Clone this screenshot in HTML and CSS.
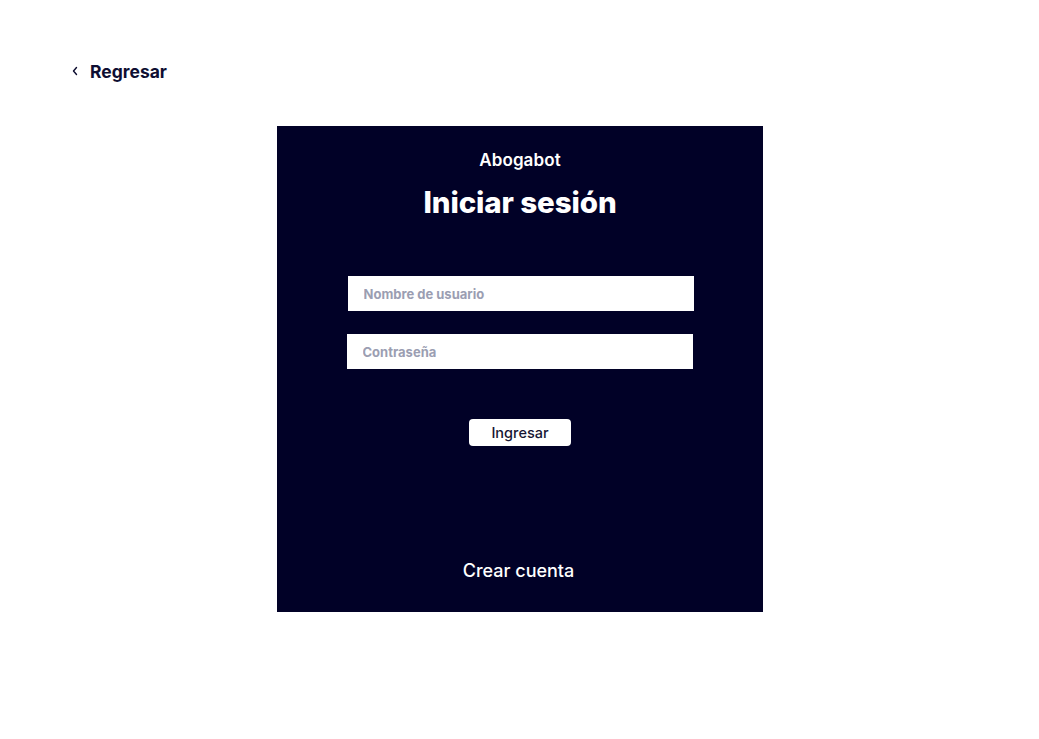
FILE: index.html
```html
<!DOCTYPE html>
<html lang="es">
<head>
<meta charset="utf-8">
<title>Abogabot - Iniciar sesión</title>
<link rel="stylesheet" href="styles.css">
</head>
<body>
<div class="page">
  <a class="back" href="#">
    <svg class="chev" width="8" height="10" viewBox="0 0 8 10"><path d="M5.5 1.5 L2.5 5 L5.5 8.5" fill="none" stroke="#0b0b2e" stroke-width="1.4" stroke-linecap="round" stroke-linejoin="round"/></svg>
    <span>Regresar</span>
  </a>
  <div class="card">
    <div class="brand">Abogabot</div>
    <h1 class="title">Iniciar sesión</h1>
    <form class="form">
      <input class="field" type="text" placeholder="Nombre de usuario">
      <input class="field field-2" type="password" placeholder="Contraseña">
      <button class="submit" type="button">Ingresar</button>
    </form>
    <a class="create" href="#">Crear cuenta</a>
  </div>
</div>
</body>
</html>
```
FILE: styles.css
```css
* { box-sizing: border-box; }
html, body { margin: 0; padding: 0; background: #ffffff; }
body { font-family: Inter, "Noto Sans", sans-serif; }
.page {
  padding: 59px 0 0 0;
  display: flex;
  flex-direction: column;
}
.back {
  display: flex;
  align-items: center;
  gap: 11px;
  margin-left: 71px;
  color: #0e0e32;
  text-decoration: none;
  font-weight: 700;
  font-size: 17.5px;
  height: 24px;
}
.chev { display: block; }
.card {
  align-self: center;
  margin-top: 43px;
  margin-left: 1px;
  width: 486px;
  height: 486px;
  background: #010127;
  display: flex;
  flex-direction: column;
  align-items: center;
  padding-top: 22px;
}
.brand {
  color: #fff;
  font-size: 17px;
  font-weight: 600;
  line-height: 24px;
  letter-spacing: 0.1px;
}
.title {
  margin: 12px 0 0 0;
  color: #fff;
  font-size: 29.5px;
  font-weight: 800;
  line-height: 36px;
  letter-spacing: -0.1px;
}
.form {
  margin-top: 56px;
  display: flex;
  flex-direction: column;
  align-items: center;
}
.field {
  width: 346px;
  height: 35px;
  border: none;
  outline: none;
  background: #fff;
  padding: 0 16px;
  font-family: inherit;
  font-size: 13px;
  font-weight: 700;
  color: #1b1b3a;
  margin-left: 1px;
}
.field::placeholder { color: #9b9eb2; font-weight: 700; }
.field-2 { margin-top: 23px; margin-left: -1px; }
.submit {
  margin-top: 50px;
  width: 102px;
  height: 27px;
  border: none;
  border-radius: 4px;
  background: #fff;
  color: #151533;
  font-family: inherit;
  font-size: 14.5px;
  font-weight: 500;
  padding: 0;
}
.create {
  margin-top: 113px;
  color: #fff;
  text-decoration: none;
  font-size: 18px;
  font-weight: 500;
  line-height: 24px;
  margin-left: -3px;
}
```
